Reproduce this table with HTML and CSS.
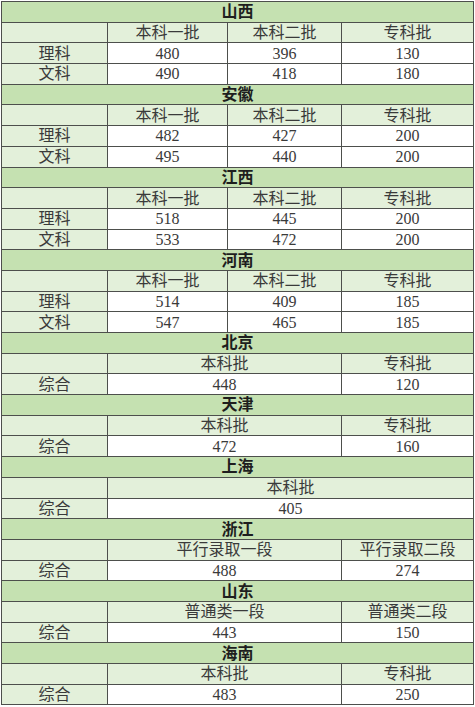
FILE: index.html
```html
<!DOCTYPE html>
<html lang="zh">
<head>
<meta charset="utf-8">
<title>分数线</title>
<link rel="stylesheet" href="styles.css">
</head>
<body>
<table class="score">
<colgroup><col class="c1"><col class="c2"><col class="c3"><col class="c4"></colgroup>
<tbody>
<tr class="title"><td colspan="4">山西</td></tr>
<tr class="head"><td></td><td>本科一批</td><td>本科二批</td><td>专科批</td></tr>
<tr><td class="lab">理科</td><td>480</td><td>396</td><td>130</td></tr>
<tr><td class="lab">文科</td><td>490</td><td>418</td><td>180</td></tr>

<tr class="title"><td colspan="4">安徽</td></tr>
<tr class="head"><td></td><td>本科一批</td><td>本科二批</td><td>专科批</td></tr>
<tr><td class="lab">理科</td><td>482</td><td>427</td><td>200</td></tr>
<tr><td class="lab">文科</td><td>495</td><td>440</td><td>200</td></tr>

<tr class="title"><td colspan="4">江西</td></tr>
<tr class="head"><td></td><td>本科一批</td><td>本科二批</td><td>专科批</td></tr>
<tr><td class="lab">理科</td><td>518</td><td>445</td><td>200</td></tr>
<tr><td class="lab">文科</td><td>533</td><td>472</td><td>200</td></tr>

<tr class="title"><td colspan="4">河南</td></tr>
<tr class="head"><td></td><td>本科一批</td><td>本科二批</td><td>专科批</td></tr>
<tr><td class="lab">理科</td><td>514</td><td>409</td><td>185</td></tr>
<tr><td class="lab">文科</td><td>547</td><td>465</td><td>185</td></tr>

<tr class="title"><td colspan="4">北京</td></tr>
<tr class="head"><td></td><td colspan="2">本科批</td><td>专科批</td></tr>
<tr><td class="lab">综合</td><td colspan="2">448</td><td>120</td></tr>

<tr class="title"><td colspan="4">天津</td></tr>
<tr class="head"><td></td><td colspan="2">本科批</td><td>专科批</td></tr>
<tr><td class="lab">综合</td><td colspan="2">472</td><td>160</td></tr>

<tr class="title"><td colspan="4">上海</td></tr>
<tr class="head"><td></td><td colspan="3">本科批</td></tr>
<tr><td class="lab">综合</td><td colspan="3">405</td></tr>

<tr class="title"><td colspan="4">浙江</td></tr>
<tr class="head"><td></td><td colspan="2">平行录取一段</td><td>平行录取二段</td></tr>
<tr><td class="lab">综合</td><td colspan="2">488</td><td>274</td></tr>

<tr class="title"><td colspan="4">山东</td></tr>
<tr class="head"><td></td><td colspan="2">普通类一段</td><td>普通类二段</td></tr>
<tr><td class="lab">综合</td><td colspan="2">443</td><td>150</td></tr>

<tr class="title"><td colspan="4">海南</td></tr>
<tr class="head"><td></td><td colspan="2">本科批</td><td>专科批</td></tr>
<tr><td class="lab">综合</td><td colspan="2">483</td><td>250</td></tr>
</tbody>
</table>
</body>
</html>
```
FILE: styles.css
```css
html, body {
  margin: 0;
  padding: 0;
  background: #ffffff;
}

body {
  padding: 1px 0 0 1px;
}

.score {
  border-collapse: collapse;
  table-layout: fixed;
  width: 472px;
  font-family: "Liberation Serif", "Noto Sans CJK SC", serif;
  font-size: 16px;
  color: #3a3a3a;
}

.c1 { width: 106px; }
.c2 { width: 120px; }
.c3 { width: 114px; }
.c4 { width: 132px; }

.score td {
  border: 1px solid #4d4f4c;
  height: 19.7px;
  padding: 0;
  line-height: 19px;
  text-align: center;
  background: #ffffff;
  overflow: hidden;
  white-space: nowrap;
}

.score tr.title td {
  background: #c5e1b1;
  font-weight: bold;
  color: #1e1e1e;
}

.score tr.head td,
.score td.lab {
  background: #e3f0da;
}
```
